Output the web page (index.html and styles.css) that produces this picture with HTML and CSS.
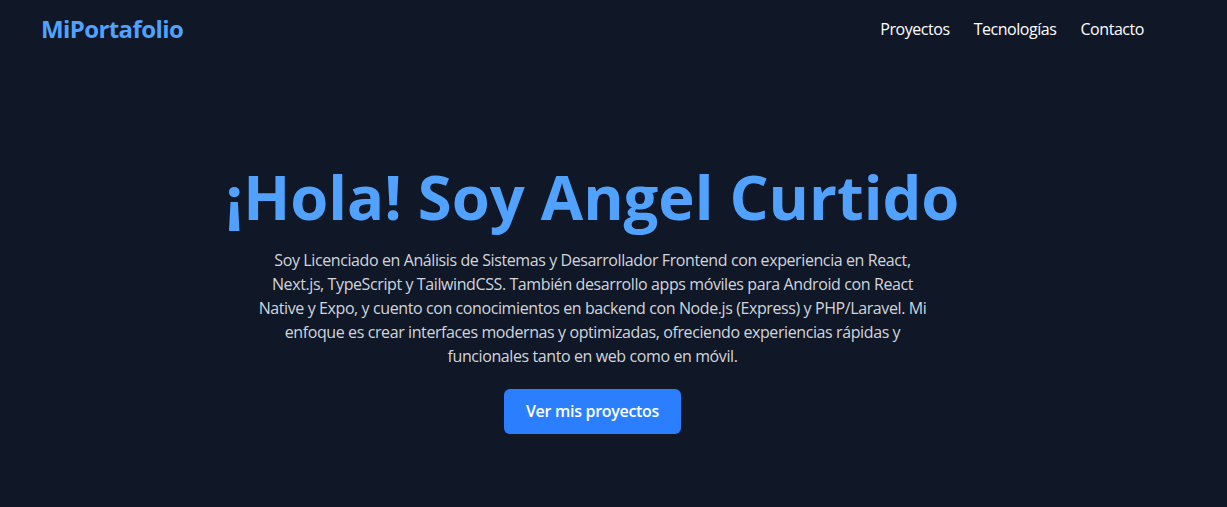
FILE: index.html
```html
<!DOCTYPE html>
<html lang="es">
<head>
<meta charset="utf-8">
<title>MiPortafolio</title>
<link rel="stylesheet" href="styles.css">
</head>
<body>
<div class="page">
  <header class="nav">
    <a class="logo" href="#">MiPortafolio</a>
    <nav class="links">
      <a href="#proyectos">Proyectos</a>
      <a href="#tecnologias">Tecnologías</a>
      <a href="#contacto">Contacto</a>
    </nav>
  </header>
  <section class="hero">
    <h1 class="title">¡Hola! Soy Angel Curtido</h1>
    <p class="intro">Soy Licenciado en Análisis de Sistemas y Desarrollador Frontend con experiencia en React,<br>Next.js, TypeScript y TailwindCSS. También desarrollo apps móviles para Android con React<br>Native y Expo, y cuento con conocimientos en backend con Node.js (Express) y PHP/Laravel. Mi<br>enfoque es crear interfaces modernas y optimizadas, ofreciendo experiencias rápidas y<br>funcionales tanto en web como en móvil.</p>
    <a class="btn" href="#proyectos">Ver mis proyectos</a>
  </section>
</div>
</body>
</html>
```
FILE: styles.css
```css
* { box-sizing: border-box; }
html, body { margin: 0; padding: 0; }
body {
  background: #101828;
  color: #ffffff;
  font-family: "Open Sans", "Noto Sans", sans-serif;
  height: 507px;
  overflow: hidden;
}
a { text-decoration: none; color: inherit; }
.page { width: calc(100% - 42px); }
.nav {
  display: flex;
  justify-content: space-between;
  align-items: center;
  padding: 13px 41px;
}
.logo {
  color: #51a2ff;
  font-size: 24px;
  font-weight: 700;
  line-height: 32px;
  letter-spacing: -0.6px;
}
.links {
  display: flex;
  gap: 24px;
  font-size: 16px;
  line-height: 24px;
  letter-spacing: -0.45px;
}
.hero {
  display: flex;
  flex-direction: column;
  align-items: center;
  text-align: center;
  padding-top: 108px;
}
.title {
  margin: 0;
  color: #51a2ff;
  font-size: 61.5px;
  font-weight: 700;
  line-height: 60px;
}
.intro {
  margin: 22px 0 0;
  color: #d1d5dc;
  font-size: 16px;
  line-height: 24px;
  letter-spacing: -0.4px;
  max-width: 760px;
}
.btn {
  margin-top: 21px;
  background: #2b7fff;
  color: #fff;
  font-weight: 600;
  font-size: 16px;
  line-height: 24px;
  letter-spacing: -0.3px;
  padding: 10px 22px 11px;
  border-radius: 6px;
}
```
